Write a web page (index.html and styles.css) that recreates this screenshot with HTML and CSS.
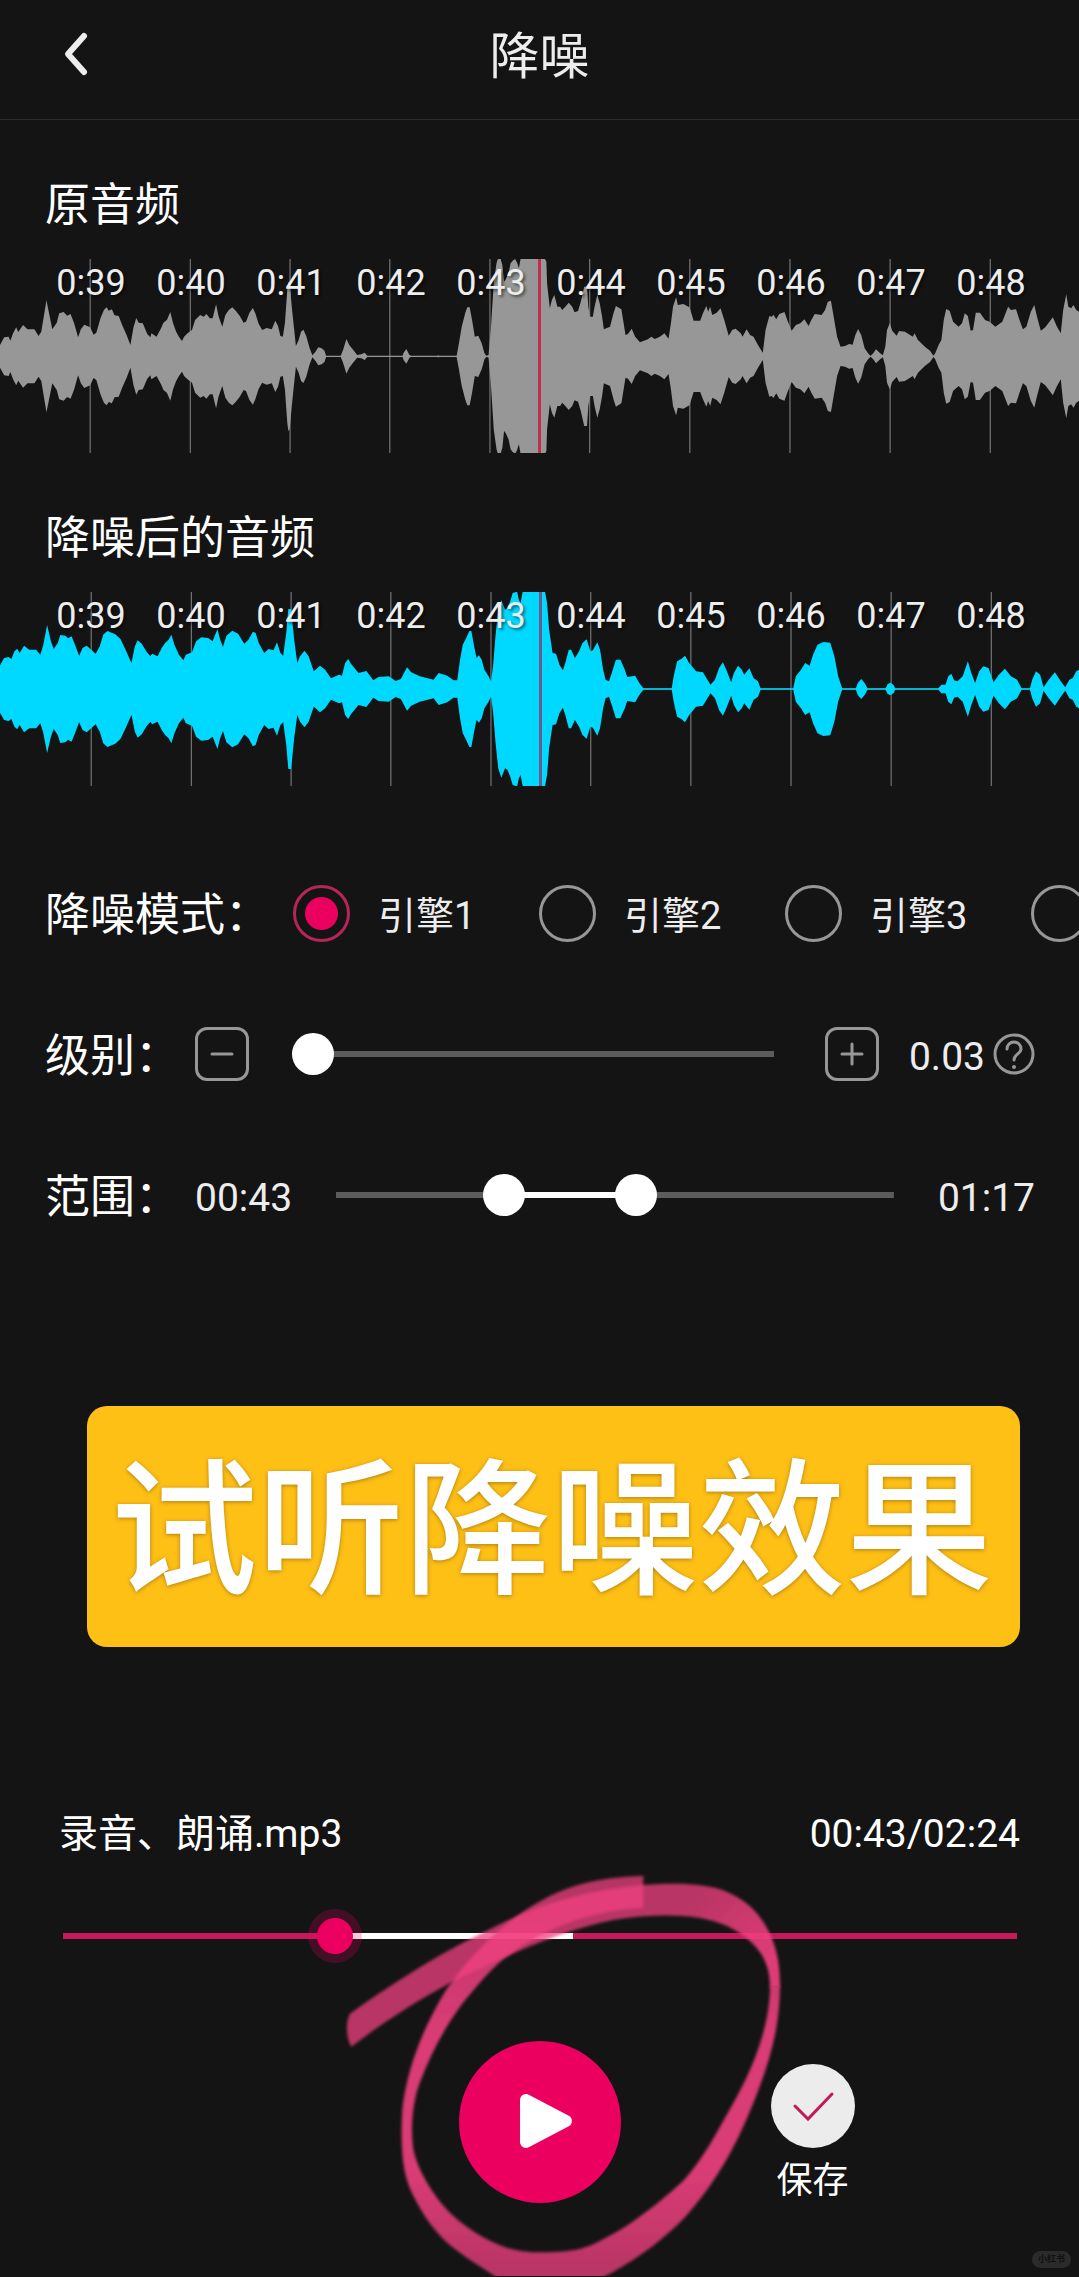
FILE: index.html
```html
<!DOCTYPE html>
<html lang="zh-CN">
<head>
<meta charset="utf-8">
<meta name="viewport" content="width=device-width, initial-scale=1">
<title>降噪</title>
<link rel="stylesheet" href="styles.css">
</head>
<body>
<header class="topbar">
  <button class="back" type="button" aria-label="返回">
    <svg width="28" height="46" viewBox="0 0 28 46"><path d="M22 5 6 23l16 18"/></svg>
  </button>
  <h1 class="title">降噪</h1>
</header>

<main>
  <section class="audio">
    <h2 class="audio-name">原音频</h2>
    <div class="track">
      <svg class="wave" viewBox="0 57 3136 582" preserveAspectRatio="none" aria-hidden="true">
        <path class="grid" d="M262 57v582M553 57v582M843 57v582M1133 57v582M1424 57v582M1714 57v582M2005 57v582M2296 57v582M2587 57v582M2878 57v582"/>
        <g id="source" class="source">
          <path d="M0 351V315L12 292 25 290 30 302 38 280 47 262 53 276 67 255 80 268 100 268 112 288 120 275 128 225 135 181 143 222 152 268 165 248 172 220 185 216 195 227 205 222 215 248 227 292 235 268 245 254 262 262 272 284 280 278 292 235 302 210 310 202 316 212 325 208 333 226 345 228 355 255 368 285 379 315 388 262 396 234 403 248 415 250 428 282 437 292 440 280 455 290 468 265 475 248 485 240 495 216 503 250 512 275 520 290 529 303 535 290 545 280 558 270 567 240 582 225 592 230 600 222 610 235 618 235 628 193 635 228 646 260 655 225 665 210 675 202 685 212 697 228 708 248 715 245 725 218 735 204 742 220 752 252 762 270 775 264 790 268 800 242 808 258 815 288 822 290 828 250 835 150 838 125 842 130 848 200 852 240 860 318 868 300 875 275 882 269 890 288 900 325 908 346 917 335 925 322 935 325 943 332 948 348 990 348 997 330 1007 297 1015 315 1025 328 1038 345 1050 343 1060 338 1068 348 1170 348 1173 338 1181 327 1190 345 1195 348 1272 348 1273 344 1275 348 1327 348 1333 315 1342 260 1352 220 1358 202 1365 202 1372 240 1380 290 1390 287 1400 310 1408 340 1414 348 1420 345 1427 260 1435 130 1443 70 1447 57 1455 57 1460 75 1465 125 1470 118 1478 100 1484 70 1490 62 1497 57 1503 68 1508 85 1513 57H1569V351Z"/>
          <path transform="translate(1568)" d="M0 351V57H16L20 65 22 130 30 205 36 180 43 165 52 200 60 200 66 210 75 200 85 188 95 200 102 217 112 213 120 185 130 140 138 140 142 200 147 230 155 230 160 200 168 165 175 190 182 230 187 268 205 260 215 220 222 198 238 208 250 285 257 282 268 266 278 290 292 307 315 298 325 290 335 297 350 290 363 280 375 296 382 250 388 200 397 172 402 195 418 192 436 202 448 242 467 242 475 220 485 198 490 215 496 200 502 225 515 218 526 205 537 240 550 287 560 270 570 266 585 280 590 290 602 268 612 285 622 290 635 315 649 338 657 270 668 228 675 230 680 224 688 238 697 222 712 216 720 240 733 272 745 255 758 250 770 238 782 258 790 240 800 222 820 225 830 210 838 185 847 182 855 230 865 290 875 320 888 318 900 312 910 314 918 285 926 267 935 285 945 325 955 340 962 348 970 340 978 328 990 340 998 346 1005 320 1010 270 1018 250 1025 272 1038 287 1045 273 1062 275 1085 290 1090 280 1100 300 1120 320 1135 332 1145 347 1150 340 1160 315 1168 300 1175 240 1182 207 1192 212 1202 245 1218 260 1228 250 1236 220 1245 228 1253 272 1260 270 1268 218 1280 218 1295 240 1308 245 1325 260 1345 245 1362 200 1370 210 1385 208 1395 240 1405 268 1415 260 1428 215 1438 195 1446 230 1457 272 1470 262 1492 232 1503 258 1515 280 1522 210 1531 163 1537 200 1545 205 1552 195 1560 210 1568 215V351Z"/>
        </g>
        <use class="source" href="#source" transform="matrix(1 0 0 -1 0 698)"/>
      </svg>
      <div class="playhead"></div>
      <div class="ruler"><span>0:39</span><span>0:40</span><span>0:41</span><span>0:42</span><span>0:43</span><span>0:44</span><span>0:45</span><span>0:46</span><span>0:47</span><span>0:48</span></div>
    </div>
  </section>

  <section class="audio">
    <h2 class="audio-name">降噪后的音频</h2>
    <div class="track">
      <svg class="wave" viewBox="0 277 3136 582" preserveAspectRatio="none" aria-hidden="true">
        <path class="grid" d="M265 277v582M556 277v582M846 277v582M1136 277v582M1427 277v582M1717 277v582M2008 277v582M2299 277v582M2590 277v582M2881 277v582"/>
        <g id="cleaned" class="cleaned">
          <path d="M0 570V497L12 475 25 472 33 478 42 455 50 447 57 460 70 438 85 450 105 450 117 465 125 440 137 376 148 425 156 448 168 430 175 406 190 408 198 416 208 410 218 435 230 468 240 445 252 438 265 450 278 462 290 440 300 405 312 394 335 404 350 418 365 450 382 490 392 440 400 422 412 432 425 455 437 470 442 462 458 470 470 445 480 430 490 420 498 405 507 435 520 465 533 482 540 465 558 458 570 425 585 413 605 415 618 425 632 388 640 420 648 442 658 408 675 393 692 402 710 432 722 420 735 396 743 400 752 430 768 460 780 448 795 452 805 428 815 460 823 468 832 400 838 328 846 328 855 420 864 490 872 470 885 453 897 470 912 515 930 498 945 510 962 536 985 525 994 528 1003 490 1012 478 1020 492 1042 520 1065 514 1085 542 1100 532 1130 530 1150 544 1165 538 1183 503 1195 518 1220 530 1260 540 1275 520 1300 528 1318 542 1329 542 1337 480 1345 435 1355 415 1364 394 1370 394 1378 440 1385 475 1392 467 1400 480 1408 510 1420 530 1427 545 1433 500 1440 410 1448 330 1457 302 1468 330 1475 325 1483 305 1490 280 1503 276 1508 300 1513 310 1519 277H1569V570Z"/>
          <path transform="translate(1568)" d="M0 570V276H16L22 310 28 390 38 460 48 462 58 495 68 512 75 490 85 450 92 450 103 475 115 455 125 430 137 419 148 455 155 452 168 428 176 450 185 510 192 540 202 545 210 520 222 480 235 480 248 510 255 532 278 528 290 550 303 567 384 567 390 530 400 485 413 477 423 468 435 490 455 515 475 518 485 535 497 555 510 540 522 505 533 488 543 510 557 548 565 520 577 498 588 510 595 525 610 506 622 535 635 545 643 567 737 567 745 530 760 510 772 490 785 498 795 465 808 435 825 427 845 429 857 470 868 530 880 567 919 567 925 550 935 538 945 550 954 567 1005 567 1012 553 1020 549 1030 557 1034 567 1158 567 1168 555 1180 555 1188 530 1197 522 1205 542 1215 545 1230 530 1245 485 1255 520 1266 550 1278 515 1290 500 1305 505 1320 548 1335 525 1353 507 1370 530 1388 540 1402 567 1425 567 1432 540 1443 515 1455 525 1465 563 1480 540 1498 518 1515 545 1528 563 1540 540 1550 535 1560 515 1568 510V570Z"/>
        </g>
        <use class="cleaned" href="#cleaned" transform="matrix(1 0 0 -1 0 1136)"/>
      </svg>
      <div class="playhead playhead-cleaned"></div>
      <div class="ruler"><span>0:39</span><span>0:40</span><span>0:41</span><span>0:42</span><span>0:43</span><span>0:44</span><span>0:45</span><span>0:46</span><span>0:47</span><span>0:48</span></div>
    </div>
  </section>

  <form class="settings">
    <div class="row row-modes" role="radiogroup" aria-labelledby="mode-name">
      <span class="row-name mode-name" id="mode-name">降噪模式：</span>
      <label class="mode"><input type="radio" name="mode" checked><span>引擎1</span></label>
      <label class="mode"><input type="radio" name="mode"><span>引擎2</span></label>
      <label class="mode"><input type="radio" name="mode"><span>引擎3</span></label>
      <label class="mode"><input type="radio" name="mode" aria-label="引擎4"></label>
    </div>
    <div class="row">
      <label class="row-name" for="level">级别：</label>
      <button class="step" type="button" aria-label="减"><svg width="54" height="54" viewBox="0 0 54 54"><path d="M17 27h20"/></svg></button>
      <input class="slider level" id="level" type="range" min="0" max="100" value="0">
      <button class="step" type="button" aria-label="加"><svg width="54" height="54" viewBox="0 0 54 54"><path d="M17 27h20M27 17v20"/></svg></button>
      <output class="value level-value" for="level">0.03</output>
      <button class="help" type="button" aria-label="帮助"><svg width="42" height="42" viewBox="0 0 42 42"><circle cx="21" cy="21" r="19"/><path d="M14 16c0-4 3-7 7-7s7 3 7 7c0 5-7 5-7 11"/><circle class="dot" cx="21" cy="34" r="2"/></svg></button>
    </div>
    <div class="row">
      <span class="row-name">范围：</span>
      <output class="value" for="from">00:43</output>
      <div class="span" style="--from: 30%; --to: 54%">
        <input class="slider" id="from" type="range" min="0" max="144" value="41" aria-label="开始">
        <input class="slider" id="to" type="range" min="0" max="144" value="78" aria-label="结束">
      </div>
      <output class="value" for="to">01:17</output>
    </div>
  </form>

  <p class="banner">试听降噪效果</p>
</main>

<footer class="player">
  <div class="file"><span>录音、朗诵.mp3</span><span>00:43/02:24</span></div>
  <div class="seek" style="--from: 30%; --to: 53.5%">
    <input class="slider seek-input" type="range" min="0" max="144" value="41" aria-label="播放进度">
  </div>
  <div class="controls">
    <button class="play" type="button" aria-label="播放">
      <svg width="162" height="162" viewBox="0 0 162 162"><path d="M67 59v42l40-21z"/></svg>
    </button>
    <button class="save" type="button">
      <svg width="84" height="84" viewBox="0 0 84 84"><circle cx="42" cy="42" r="42"/><path d="M24 42l13 13 24-25"/></svg>
      <span>保存</span>
    </button>
  </div>
  <svg class="scribble" width="480" height="417" viewBox="0 0 1440 1251" aria-hidden="true">
    <defs>
      <linearGradient id="loop" gradientUnits="userSpaceOnUse" x1="0" y1="50" x2="0" y2="1230">
        <stop offset="0" stop-color="#f0407f" stop-opacity=".72"/>
        <stop offset=".15" stop-color="#f0407f" stop-opacity=".8"/>
        <stop offset=".4" stop-color="#f0407f" stop-opacity=".9"/>
        <stop offset=".75" stop-color="#f0407f" stop-opacity=".9"/>
        <stop offset="1" stop-color="#f0407f" stop-opacity=".75"/>
      </linearGradient>
      <linearGradient id="tail" gradientUnits="userSpaceOnUse" x1="1120" y1="100" x2="1330" y2="300">
        <stop offset="0" stop-color="#f0407f" stop-opacity=".75"/>
        <stop offset="1" stop-color="#f0407f" stop-opacity=".92"/>
      </linearGradient>
      <filter id="soft" x="-5%" y="-5%" width="110%" height="110%"><feGaussianBlur stdDeviation="4"/></filter>
    </defs>
    <path fill="url(#loop)" filter="url(#soft)" d="M940 50C800 55 700 80 600 145C500 210 420 290 350 390C270 520 230 640 217 750C210 870 218 950 250 1010C280 1070 310 1110 345 1145C400 1195 460 1225 520 1270H790C900 1215 980 1160 1060 1080C1160 970 1215 860 1250 780C1310 640 1350 520 1350 380H1320C1320 500 1270 630 1200 750C1160 820 1120 900 1060 965C990 1030 900 1100 830 1135C770 1170 730 1180 640 1180C580 1180 540 1175 480 1145C430 1120 380 1085 340 1040C290 980 260 920 250 870C240 800 250 720 270 670C300 590 340 510 400 430C450 370 490 320 540 285C650 205 780 155 940 146Z"/>
    <path fill="url(#tail)" filter="url(#soft)" d="M1350 384C1350 330 1345 280 1320 225C1290 160 1250 125 1190 98C1120 70 1030 72 940 78C860 85 770 100 690 125C600 150 520 190 440 230C300 300 170 385 60 464C46 490 48 535 64 563C160 490 260 425 355 375C430 335 510 300 600 262C720 215 820 180 940 172C1040 165 1120 170 1190 200C1290 250 1320 310 1320 384Z"/>
  </svg>
  <span class="watermark">小红书</span>
</footer>
</body>
</html>
```
FILE: styles.css
```css
* {
  box-sizing: border-box;
}

body {
  margin: 0;
  overflow-x: hidden;
  background: #141414;
  color: #fff;
  font-family: Roboto, "Noto Sans CJK SC", sans-serif;
  font-size: 39px;
  line-height: 60px;
}

button {
  display: block;
  padding: 0;
  border: 0;
  background: none;
  color: inherit;
  font: inherit;
}

svg {
  display: block;
}

h1,
h2,
p {
  margin: 0;
  font-weight: 400;
}

/* top bar */
.topbar {
  display: grid;
  grid-template-columns: 1fr auto 1fr;
  align-items: center;
  height: 120px;
  padding: 0 62px 12px;
  border-bottom: 1px solid #2d2d2d;
  color: #ededed;
}

.back {
  justify-self: start;
}

.back path {
  fill: none;
  stroke: #ededed;
  stroke-width: 6;
  stroke-linecap: round;
  stroke-linejoin: round;
}

.title {
  padding-top: 6px;
  font-size: 50px;
}

/* waveforms */
.audio {
  padding-top: 52px;
}

.audio-name {
  padding: 4px 45px 0;
  margin-bottom: 23px;
  font-size: 45px;
  line-height: 60px;
}

.track {
  position: relative;
  height: 194px;
}

.wave {
  width: 100%;
  height: 100%;
}

.grid {
  fill: none;
  stroke: #888;
  stroke-width: 1px;
  vector-effect: non-scaling-stroke;
}

.source {
  fill: #979797;
}

.cleaned {
  fill: #00d9ff;
}

.playhead {
  position: absolute;
  top: 0;
  left: calc(50% - 2px);
  width: 3px;
  height: 100%;
  background: #c22e50;
}

.playhead-cleaned {
  left: calc(50% - 1px);
  background: #6b5a8e;
}

.ruler {
  position: absolute;
  inset: 4px 38px auto 41px;
  display: grid;
  grid-template-columns: repeat(10, 1fr);
  color: #ededed;
  font-size: 36px;
  line-height: 40px;
  text-align: center;
  text-shadow: 2px 2px 3px rgba(0, 0, 0, .5);
}

/* settings */
.settings {
  display: grid;
  gap: 81px;
  padding-top: 97px;
}

.row {
  display: flex;
  align-items: center;
  height: 60px;
  padding: 0 44px 0 45px;
}

.row-modes {
  padding-right: 0;
  overflow: hidden;
}

.row-name,
.value,
.mode span {
  padding-top: 5px;
}

.row-name {
  flex: 0 0 150px;
  font-size: 45px;
  white-space: nowrap;
}

.mode-name {
  flex-basis: 248px;
}

.mode {
  display: flex;
  flex: 0 0 246px;
  align-items: center;
  gap: 28px;
  color: #ededed;
  font-size: 38px;
}

.mode input {
  flex: none;
  width: 57px;
  height: 57px;
  margin: 0;
  border: 3px solid #979797;
  border-radius: 50%;
  appearance: none;
}

.mode input:checked {
  border-color: #b72558;
  background: radial-gradient(circle, #eb0060 16px, transparent 17px);
}

.step {
  flex: none;
  width: 54px;
  height: 54px;
  border: 3px solid #979797;
  border-radius: 12px;
}

.step svg {
  margin: -3px;
}

.step path {
  stroke: #979797;
  stroke-width: 3;
  stroke-linecap: round;
}

.value {
  color: #ededed;
}

.level-value {
  margin: 0 8px 0 30px;
}

.help {
  flex: none;
}

.help svg {
  fill: none;
  stroke: #979797;
  stroke-width: 3;
  stroke-linecap: round;
}

.help .dot {
  fill: #979797;
  stroke: none;
}

/* sliders */
.slider {
  width: 100%;
  min-width: 0;
  height: 42px;
  margin: 0;
  background: none;
  appearance: none;
}

.slider::-webkit-slider-thumb {
  width: 42px;
  height: 42px;
  border-radius: 50%;
  background: #fff;
  appearance: none;
}

.level {
  flex: 1;
  margin: 0 51px 0 43px;
  background: linear-gradient(#5c5c5c, #5c5c5c) center / 100% 6px no-repeat;
}

.span {
  display: grid;
  flex: 1;
  margin: 0 44px;
  background:
    linear-gradient(90deg, #5c5c5c var(--from), #fff var(--from) var(--to), #5c5c5c var(--to))
    center / 100% 6px no-repeat;
}

.span .slider {
  grid-area: 1 / 1;
  pointer-events: none;
}

.span .slider::-webkit-slider-thumb {
  pointer-events: auto;
}

/* banner */
.banner {
  margin: 181px 59px 0 87px;
  padding: 26px 4px 14px 0;
  border-radius: 20px;
  background: #ffc016;
  font-size: 147px;
  font-weight: 500;
  line-height: 201px;
  text-align: center;
  text-shadow: 0 1px 4px rgba(90, 60, 0, .5);
  white-space: nowrap;
}

/* player */
.player {
  position: relative;
  padding: 157px 59px 73px;
  overflow: hidden;
}

.file {
  display: flex;
  justify-content: space-between;
}

.seek {
  display: grid;
  align-items: center;
  height: 54px;
  margin: 45px -15px 78px -14px;
  background:
    linear-gradient(90deg, #c41a5b var(--from), #fff var(--from) var(--to), #c41a5b var(--to))
    center / calc(100% - 36px) 6px no-repeat;
}

.seek-input::-webkit-slider-thumb {
  width: 36px;
  height: 36px;
  background: #eb0060;
  box-shadow: 0 0 0 9px rgba(235, 0, 96, .22);
}

.controls {
  display: grid;
  grid-template-columns: 1fr auto 1fr;
  align-items: end;
}

.play {
  grid-column: 2;
  border-radius: 50%;
  background: #eb0060;
}

.play path {
  fill: #fff;
  stroke: #fff;
  stroke-width: 12;
  stroke-linejoin: round;
}

.save {
  display: grid;
  justify-self: start;
  justify-items: center;
  gap: 11px;
  margin-left: 150px;
  font-size: 36px;
  line-height: 44px;
}

.save circle {
  fill: #ececec;
}

.save path {
  fill: none;
  stroke: #c41a5b;
  stroke-width: 3;
  stroke-linecap: round;
}

/* marker stroke laid over the controls */
.scribble {
  position: absolute;
  bottom: 0;
  left: calc(50% - 210px);
  pointer-events: none;
}

.watermark {
  position: absolute;
  right: 8px;
  bottom: 8px;
  padding: 0 6px;
  border-radius: 9px;
  background: #2b2b2b;
  color: #101010;
  font-size: 9px;
  font-weight: 700;
  line-height: 17px;
}
```
